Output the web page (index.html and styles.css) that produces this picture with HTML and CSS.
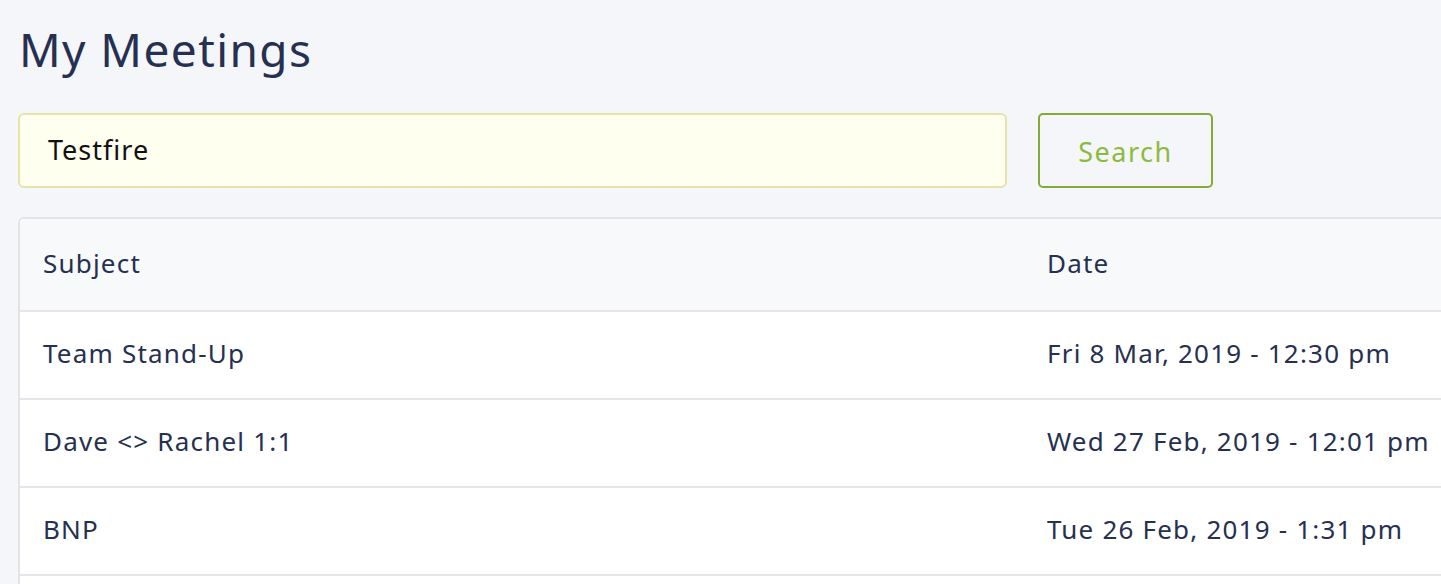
FILE: index.html
```html
<!DOCTYPE html>
<html>
<head>
<meta charset="utf-8">
<link rel="stylesheet" href="styles.css">
</head>
<body>
<div class="page">
  <h1 class="title">My Meetings</h1>
  <div class="search-row">
    <div class="search-input">Testfire</div>
    <button class="search-btn">Search</button>
  </div>
  <div class="table">
    <div class="row head">
      <div class="cell">Subject</div>
      <div class="cell">Date</div>
    </div>
    <div class="row">
      <div class="cell">Team Stand-Up</div>
      <div class="cell">Fri 8 Mar, 2019 - 12:30 pm</div>
    </div>
    <div class="row">
      <div class="cell">Dave &lt;&gt; Rachel 1:1</div>
      <div class="cell">Wed 27 Feb, 2019 - 12:01 pm</div>
    </div>
    <div class="row">
      <div class="cell">BNP</div>
      <div class="cell">Tue 26 Feb, 2019 - 1:31 pm</div>
    </div>
    <div class="row">
      <div class="cell">&nbsp;</div>
      <div class="cell">&nbsp;</div>
    </div>
  </div>
</div>
</body>
</html>
```

FILE: styles.css
```css
html, body {
  margin: 0;
  padding: 0;
  background: #f5f6fa;
}
body {
  font-family: "Noto Sans", "Liberation Sans", sans-serif;
  color: #263050;
}
.page {
  box-sizing: border-box;
  padding: 0 0 0 18px;
  width: 100vw;
  height: 100vh;
  overflow: hidden;
}
.title {
  margin: 0;
  padding: 20px 0 0 1px;
  font-size: 46px;
  font-weight: 400;
  line-height: 58px;
  letter-spacing: 1.4px;
  color: #263050;
}
.search-row {
  display: flex;
  gap: 31px;
  margin-top: 35px;
}
.search-input {
  box-sizing: border-box;
  width: 989px;
  height: 75px;
  border: 2px solid #e6e2a8;
  border-radius: 6px;
  background: #fffff0;
  padding: 0 0 2px 28px;
  display: flex;
  align-items: center;
  font-size: 27px;
  letter-spacing: 1px;
  color: #111;
}
.search-btn {
  box-sizing: border-box;
  width: 175px;
  height: 75px;
  border: 2px solid #84ab35;
  border-radius: 5px;
  background: transparent;
  font-family: inherit;
  font-size: 27px;
  color: #8cba3f;
  letter-spacing: 1.5px;
  padding: 2px 0 0;
}
.table {
  margin-top: 29px;
  border: 2px solid #e3e3e5;
  border-right: none;
  border-bottom: none;
  border-radius: 6px 0 0 0;
  background: #fff;
}
.row {
  box-sizing: border-box;
  display: grid;
  grid-template-columns: 1004px 1fr;
  height: 88px;
  padding-bottom: 4px;
  align-items: center;
  border-top: 2px solid #e6e6e8;
  font-size: 26px;
}
.row.head {
  border-top: none;
  height: 91px;
  background: #f8f9fb;
  border-radius: 6px 0 0 0;
}
.cell {
  padding-left: 23px;
  letter-spacing: 1.2px;
  white-space: nowrap;
}
```
